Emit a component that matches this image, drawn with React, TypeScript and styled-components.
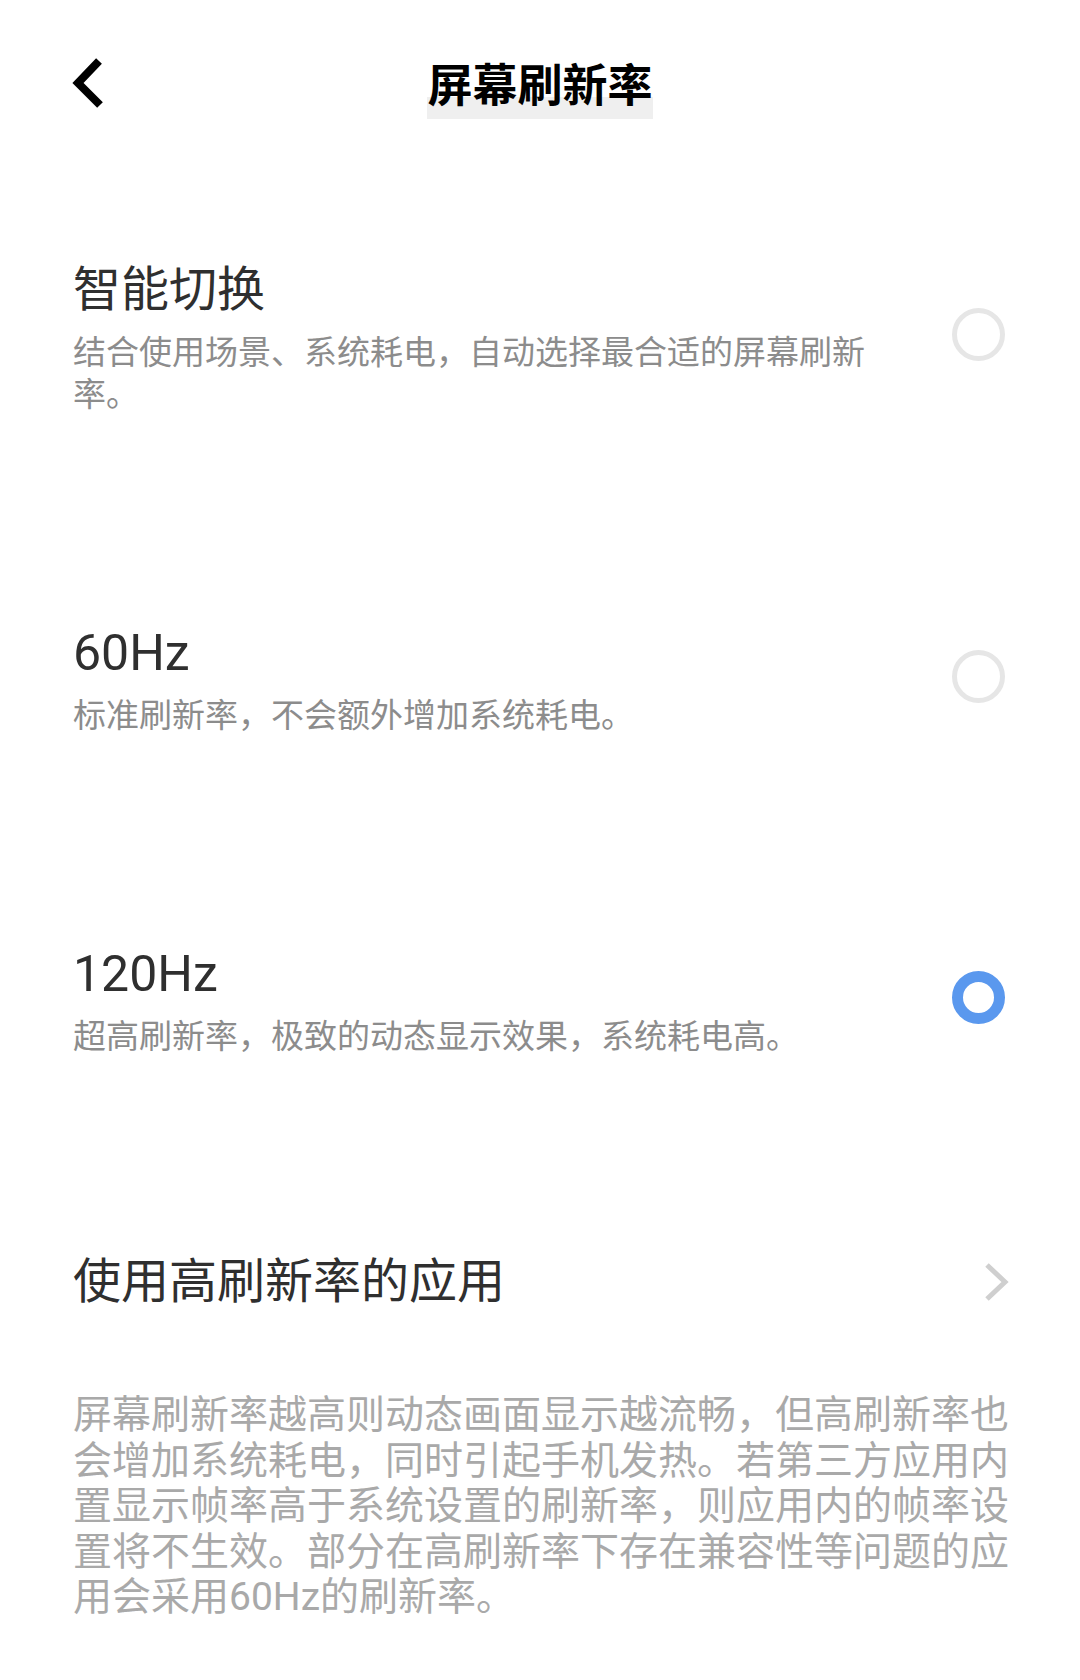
import React from "react";
import styled, { createGlobalStyle } from "styled-components";

const GlobalStyle = createGlobalStyle`
  html, body {
    margin: 0;
    padding: 0;
    background: #ffffff;
  }
  body {
    font-family: "Roboto", "Noto Sans CJK SC", sans-serif;
    -webkit-font-smoothing: antialiased;
  }
  * { box-sizing: border-box; }
`;

const Page = styled.div`
  width: 1080px;
  min-height: 1680px;
  background: #ffffff;
  display: flex;
  flex-direction: column;
`;

const Header = styled.header`
  display: grid;
  grid-template-columns: 1fr auto 1fr;
  align-items: start;
  height: 154px;
  padding-top: 55px;
`;

const BackButton = styled.button`
  justify-self: start;
  margin-left: 66px;
  width: 40px;
  height: 56px;
  padding: 0;
  border: none;
  background: transparent;
  display: flex;
  cursor: pointer;
`;

const HeaderTitle = styled.h1`
  margin: 0;
  font-family: "Noto Sans CJK SC", sans-serif;
  font-size: 45px;
  font-weight: 700;
  line-height: 56px;
  padding-bottom: 8px;
  color: #000000;
  background: linear-gradient(to bottom, transparent 42px, #efefef 42px);
`;

const OptionList = styled.div`
  display: flex;
  flex-direction: column;
  gap: 207px;
  padding-top: 106px;
`;

const Option = styled.label`
  display: flex;
  align-items: center;
  justify-content: space-between;
  padding: 0 75px 0 73px;
  cursor: pointer;
`;

const TextCol = styled.div`
  display: flex;
  flex-direction: column;
  max-width: 820px;
`;

const OptionTitle = styled.div<{ $latin?: boolean }>`
  font-size: ${(p) => (p.$latin ? "50px" : "48px")};
  line-height: 60px;
  height: 60px;
  color: #2f2f2f;
  font-weight: 400;
`;

const OptionDesc = styled.div`
  margin-top: 12px;
  font-size: 33px;
  line-height: 42px;
  color: #8c8c8c;
`;

const Radio = styled.span<{ $checked?: boolean }>`
  flex: none;
  width: 53px;
  height: 53px;
  border-radius: 50%;
  margin-bottom: 8px;
  border: ${(p) => (p.$checked ? "11.5px solid #5a98ee" : "5px solid #e6e6e6")};
  background: #ffffff;
`;

const LinkRow = styled.div`
  margin-top: 194px;
  display: flex;
  align-items: center;
  justify-content: space-between;
  padding: 0 68px 0 73px;
  cursor: pointer;
`;

const LinkTitle = styled.div`
  font-size: 48px;
  line-height: 60px;
  color: #2f2f2f;
`;

const Note = styled.p`
  margin: 81px 0 0 0;
  padding: 0 67px 0 73px;
  font-size: 39px;
  line-height: 45.5px;
  color: #a9a9a9;
`;

const options = [
  {
    title: "智能切换",
    latin: false,
    desc: "结合使用场景、系统耗电，自动选择最合适的屏幕刷新率。",
    checked: false,
  },
  {
    title: "60Hz",
    latin: true,
    desc: "标准刷新率，不会额外增加系统耗电。",
    checked: false,
  },
  {
    title: "120Hz",
    latin: true,
    desc: "超高刷新率，极致的动态显示效果，系统耗电高。",
    checked: true,
  },
];

export default function App() {
  return (
    <Page>
      <GlobalStyle />
      <Header>
        <BackButton aria-label="返回">
          <svg width="40" height="56" viewBox="0 0 40 56">
            <polyline
              points="33,6 12,28 34,50"
              fill="none"
              stroke="#000"
              strokeWidth="8"
              strokeLinejoin="miter"
              strokeLinecap="butt"
            />
          </svg>
        </BackButton>
        <HeaderTitle>屏幕刷新率</HeaderTitle>
        <div />
      </Header>

      <OptionList>
        {options.map((o) => (
          <Option key={o.title}>
            <TextCol>
              <OptionTitle $latin={o.latin}>{o.title}</OptionTitle>
              <OptionDesc>{o.desc}</OptionDesc>
            </TextCol>
            <Radio $checked={o.checked} />
          </Option>
        ))}
      </OptionList>

      <LinkRow>
        <LinkTitle>使用高刷新率的应用</LinkTitle>
        <svg width="28" height="44" viewBox="0 0 28 44">
          <polyline
            points="3,5 21,22 3,39"
            fill="none"
            stroke="#cfcfcf"
            strokeWidth="5"
            strokeLinejoin="miter"
            strokeLinecap="butt"
          />
        </svg>
      </LinkRow>

      <Note>
        屏幕刷新率越高则动态画面显示越流畅，但高刷新率也会增加系统耗电，同时引起手机发热。若第三方应用内置显示帧率高于系统设置的刷新率，则应用内的帧率设置将不生效。部分在高刷新率下存在兼容性等问题的应用会采用60Hz的刷新率。
      </Note>
    </Page>
  );
}
